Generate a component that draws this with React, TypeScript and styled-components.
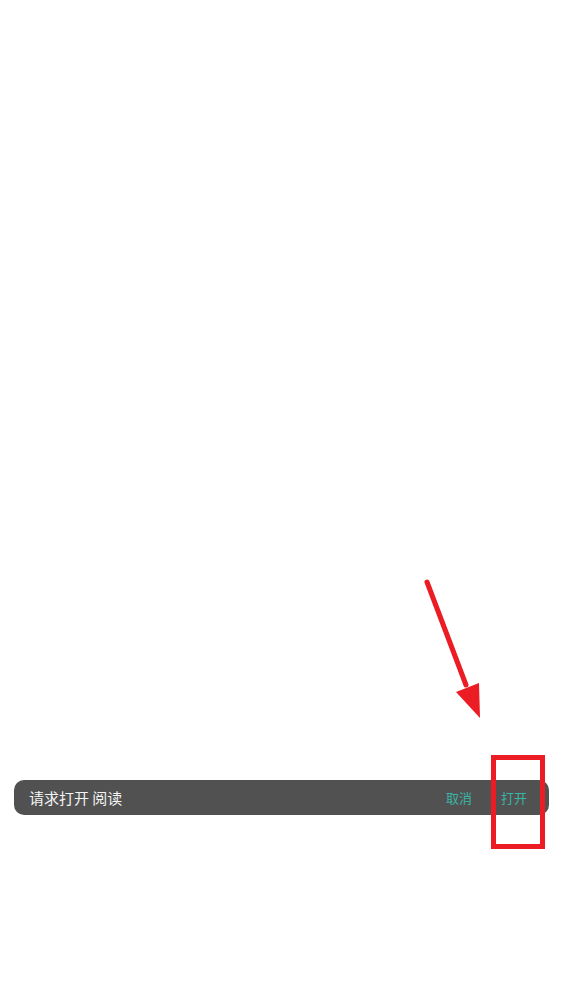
import styled, { createGlobalStyle } from 'styled-components'

const GlobalStyle = createGlobalStyle`
  html, body {
    margin: 0;
    padding: 0;
    background: #ffffff;
    font-family: "Noto Sans CJK SC", "Noto Sans", sans-serif;
  }
`

const Page = styled.div`
  position: relative;
  width: 564px;
  height: 1004px;
  padding-top: 780px;
  box-sizing: border-box;
  overflow: hidden;
`

const Snackbar = styled.div`
  display: flex;
  align-items: center;
  height: 35px;
  margin: 0 15px 0 14px;
  padding: 0 22px 0 15px;
  background: #515151;
  border-radius: 10px;
`

const Message = styled.span`
  flex: 1;
  color: #f4f4f4;
  font-size: 15px;
  white-space: pre;
`

const Action = styled.button<{ $gap?: number }>`
  border: 0;
  padding: 0;
  background: none;
  margin-left: ${p => p.$gap ?? 0}px;
  color: #3ab4a6;
  font-family: inherit;
  font-size: 13px;
  cursor: pointer;
`

const Highlight = styled.div`
  position: absolute;
  left: 491px;
  top: 755px;
  width: 54px;
  height: 94px;
  border: 5px solid #ec1c24;
  box-sizing: border-box;
`

const Arrow = styled.svg`
  position: absolute;
  left: 0;
  top: 0;
`

const App = () => {
  return (
    <>
      <GlobalStyle />
      <Page>
        <Snackbar>
          <Message>请求打开 阅读</Message>
          <Action>取消</Action>
          <Action $gap={29}>打开</Action>
        </Snackbar>
        <Highlight />
        <Arrow width="564" height="1004" viewBox="0 0 564 1004">
          <line x1="427" y1="582" x2="466" y2="685" stroke="#ec1c24" strokeWidth="5" strokeLinecap="round" />
          <polygon points="456,692 479,683 480,718" fill="#ec1c24" />
        </Arrow>
      </Page>
    </>
  )
}

export default App
